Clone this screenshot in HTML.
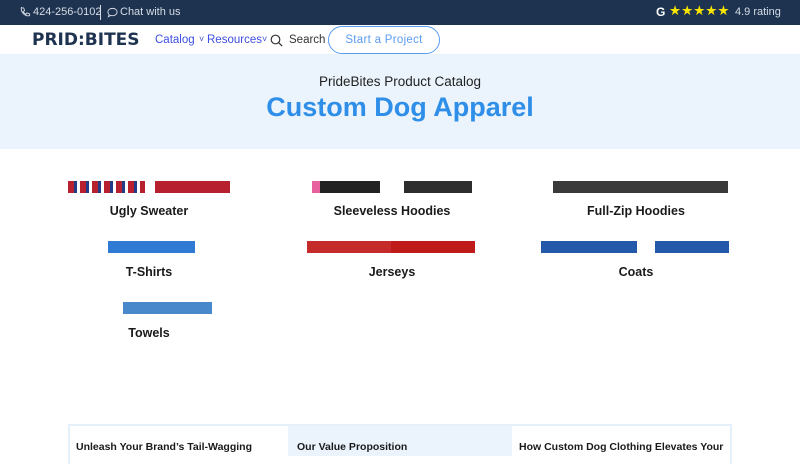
<!DOCTYPE html>
<html><head><meta charset="utf-8"><style>
*{margin:0;padding:0;box-sizing:border-box}
body{width:800px;height:450px;overflow:hidden;background:#fff;font-family:"Liberation Sans",sans-serif;position:relative}
.top{position:absolute;left:0;top:0;width:800px;height:25px;background:#1e3350;color:#d6dce6;font-size:11px}
.top span{position:absolute;top:6px}
.nav{position:absolute;top:25px;left:0;width:800px;height:29px;background:#fff}
.abs{position:absolute}
.hero{position:absolute;top:54px;left:0;width:800px;height:95px;background:#ebf4fd;text-align:center}
.lbl{position:absolute;width:240px;text-align:center;font-weight:bold;font-size:12.5px;color:#1a1a1a}
.b{position:absolute;height:12px}
.nv{position:absolute;top:9px;font-size:11.5px;color:#3d4fe0}
</style></head><body>
<div class="top">
<svg class="abs" style="left:20px;top:7px" width="11" height="11" viewBox="0 0 12 12"><path d="M2 1l2 0 1 3-1.5 1a6 6 0 003 3l1-1.5 3 1v2c-5 1-10-4-9-9z" fill="none" stroke="#d6dce6" stroke-width="1"/></svg>
<span style="left:33px">424-256-0102</span>
<div class="abs" style="left:100px;top:5px;width:1px;height:15px;background:#d6dce6"></div>
<svg class="abs" style="left:107px;top:7px" width="11" height="11" viewBox="0 0 12 12"><path d="M6 1.5c3 0 5 1.8 5 4s-2 4-5 4c-.8 0-1.5-.1-2-.3L1.5 10.5l.8-2.2C1.5 7.5 1 6.5 1 5.5c0-2.2 2-4 5-4z" fill="none" stroke="#d6dce6" stroke-width="1"/></svg>
<span style="left:120px">Chat with us</span>
<span style="left:656px;top:5px;font-weight:bold;font-size:12px;color:#fff">G</span>
<span style="left:669px;top:3px;color:#f7e400;font-size:13.5px;letter-spacing:0px">★★★★★</span>
<span style="left:735px">4.9 rating</span>
</div>
<div class="nav">
<div class="abs" style="left:32px;top:5px;font-weight:900;font-size:17px;color:#1e3350;letter-spacing:0px;font-family:'DejaVu Sans',sans-serif">PRID:BITES</div>
<div class="nv" style="left:155px">Catalog</div>
<div class="nv" style="left:199px;font-size:9px;top:9px">˅</div>
<div class="nv" style="left:207px">Resources</div>
<div class="nv" style="left:262px;font-size:9px;top:9px">˅</div>
<svg class="abs" style="left:270px;top:9px" width="13" height="13" viewBox="0 0 13 13"><circle cx="5.5" cy="5.5" r="4.3" fill="none" stroke="#333" stroke-width="1.2"/><path d="M8.6 8.6l3.5 3.5" stroke="#333" stroke-width="1.2"/></svg>
<div class="abs" style="left:289px;top:9px;font-size:11.5px;color:#333">Search</div>
<div class="abs" style="left:328px;top:1px;width:112px;height:28px;border:1.5px solid #5b9df0;border-radius:14px;text-align:center;line-height:26px;font-size:11.5px;color:#5b9df0;letter-spacing:.3px">Start a Project</div>
</div>
<div class="hero">
<div style="position:absolute;top:20px;width:800px;font-size:13.5px;color:#222">PrideBites Product Catalog</div>
<div style="position:absolute;top:38px;width:800px;font-size:27px;font-weight:bold;color:#2e8ee8">Custom Dog Apparel</div>
</div>
<div class="b" style="left:68px;top:181px;width:77px;background:repeating-linear-gradient(90deg,#b7212f 0 6px,#223c8a 6px 9px,#fff 9px 12px)"></div>
<div class="b" style="left:155px;top:181px;width:75px;background:#b7212f"></div>
<div class="b" style="left:312px;top:181px;width:68px;background:#222;border-left:8px solid #e9609e"></div>
<div class="b" style="left:404px;top:181px;width:68px;background:#2d2d2d"></div>
<div class="b" style="left:553px;top:181px;width:175px;background:#3a3a3a"></div>
<div class="b" style="left:108px;top:241px;width:87px;background:#2f7ad2"></div>
<div class="b" style="left:307px;top:241px;width:168px;background:linear-gradient(90deg,#c62b2b 0 50%,#c01b1b 50%)"></div>
<div class="b" style="left:541px;top:241px;width:96px;background:#2458a8"></div>
<div class="b" style="left:655px;top:241px;width:74px;background:#2458a8"></div>
<div class="b" style="left:123px;top:302px;width:89px;background:#4a88cc"></div>
<div class="lbl" style="left:29px;top:204px">Ugly Sweater</div>
<div class="lbl" style="left:272px;top:204px">Sleeveless Hoodies</div>
<div class="lbl" style="left:516px;top:204px">Full-Zip Hoodies</div>
<div class="lbl" style="left:29px;top:265px">T-Shirts</div>
<div class="lbl" style="left:272px;top:265px">Jerseys</div>
<div class="lbl" style="left:516px;top:265px">Coats</div>
<div class="lbl" style="left:29px;top:326px">Towels</div>
<div class="abs" style="left:68px;top:424px;width:664px;height:40px;border:2px solid #e6f0fb;border-bottom:none"></div>
<div class="abs" style="left:288px;top:426px;width:224px;height:30px;background:#ebf4fd"></div>
<div class="abs" style="left:76px;top:441px;font-size:10.5px;font-weight:bold;color:#1a1a1a">Unleash Your Brand’s Tail-Wagging</div>
<div class="abs" style="left:297px;top:441px;font-size:10.5px;font-weight:bold;color:#1a1a1a">Our Value Proposition</div>
<div class="abs" style="left:519px;top:441px;font-size:10.5px;font-weight:bold;color:#1a1a1a">How Custom Dog Clothing Elevates Your</div>
</body></html>
